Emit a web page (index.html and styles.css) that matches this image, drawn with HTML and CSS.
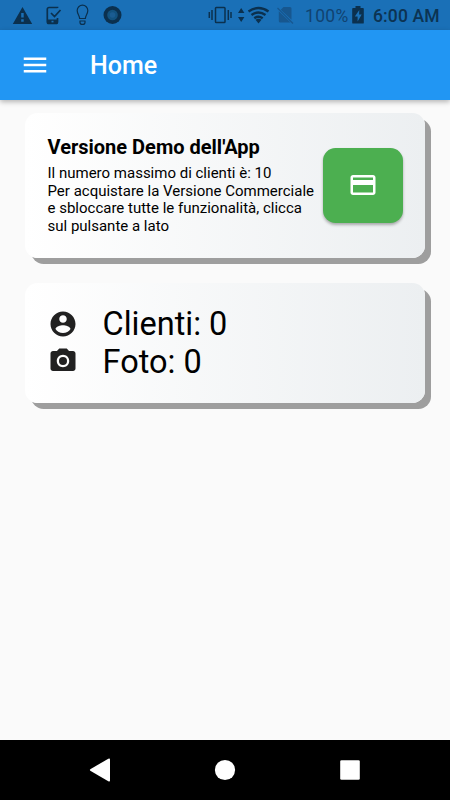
FILE: index.html
```html
<!DOCTYPE html>
<html lang="it">
<head>
<meta charset="utf-8">
<title>Home</title>
<link rel="stylesheet" href="styles.css">
</head>
<body>
<div class="screen">
  <div class="status">
    <svg class="status-left" width="130" height="30" viewBox="0 0 130 30">
      <path class="dark" fill-rule="evenodd" d="M22.5 7 32.2 24H12.8ZM21.2 13v4.6h2.5V13ZM21.2 19.3v2.4h2.5v-2.4Z"/>
      <path class="line" stroke-width="1.7" d="M57.5 8V7.500H49a1.700 1.700 0 0 0-1.700 1.700v12.600a1.700 1.700 0 0 0 1.700 1.700h6.800a1.700 1.700 0 0 0 1.700-1.700V18M51 13l3.500 3.500 6-6.500"/>
      <path class="dark" fill-rule="evenodd" d="M47 19.500h11v4H47ZM51.500 20.800v1.700h2v-1.700Z"/>
      <path class="line" stroke-width="1.200" d="M79.600 18.500c0-3.200-2.400-4.500-2.400-8a5.300 5.300 0 0 1 10.600 0c0 3.500-2.400 4.800-2.400 8ZM79.500 21h6M80 21v1.400c0 2.600 5 2.600 5 0V21"/>
      <circle class="dark" cx="112.500" cy="15" r="9"/>
      <circle cx="112.500" cy="15" r="5.300" fill="#12527f"/>
      <circle cx="112.500" cy="15" r="2.800" fill="#1a5c91"/>
    </svg>
    <svg class="status-right" width="71" height="30" viewBox="0 0 71 30">
      <rect class="line" stroke-width="1.500" x="10.500" y="7.500" width="9.500" height="15" rx=".8"/>
      <path class="line" stroke-width="1.500" d="M7 10v10M23.300 10v10M4.300 12v6M26 12v6"/>
      <path class="dark" d="m36.200 8 3.200 5H33ZM33 17h6.400l-3.200 5Z"/>
      <path class="line" stroke-width="2.400" d="M43.500 11.500q10-7 20 0M46.500 15q7-5 14 0M49.300 18.300q4.200-3 8.400 0"/>
      <path class="dark" d="m53.500 23.500-3-3.800q3-2 6 0Z"/>
    </svg>
    <svg class="status-sim" width="18" height="30" viewBox="0 0 18 30">
      <path fill="#17578f" d="M7.500 7H14q1.500 0 1.500 1.500V19.800L4.800 9.700ZM2.800 11.200 14.500 22.500H4.300q-1.500 0-1.500-1.500Z"/>
      <path stroke="#17578f" stroke-width="1.300" d="m1.500 8 15.500 15.500"/>
    </svg>
    <span class="percent">100%</span>
    <svg class="battery" width="12" height="30" viewBox="0 0 12 30">
      <path class="dark" fill-rule="evenodd" d="M3.500 6h5v1.900h2.400q.9 0 .9.900v13.900q0 .9-.9.900H1.100q-.9 0-.9-.9V8.800q0-.9.900-.9h2.400ZM7.300 10 2.800 16.500h2.800v5l4.100-7H7.100Z"/>
    </svg>
    <span class="clock">6:00 AM</span>
  </div>
  <header class="appbar">
    <svg width="30" height="30" viewBox="0 0 24 24"><path fill="#fff" d="M3 18h18v-2H3v2zm0-5h18v-2H3v2zm0-7v2h18V6H3z"/></svg>
    <h1>Home</h1>
  </header>
  <main>
    <section class="card demo">
      <div class="copy">
        <h2>Versione Demo dell'App</h2>
        <p>Il numero massimo di clienti è: 10<br>Per acquistare la Versione Commerciale<br>e sbloccare tutte le funzionalità, clicca<br>sul pulsante a lato</p>
      </div>
      <button class="buy" aria-label="Acquista">
        <svg width="30" height="30" viewBox="0 0 24 24"><path fill="#fff" d="M20 4H4c-1.110 0-1.990.890-1.990 2L2 18c0 1.110.890 2 2 2h16c1.110 0 2-.890 2-2V6c0-1.110-.890-2-2-2zm0 14H4v-6h16v6zm0-10H4V6h16v2z"/></svg>
      </button>
    </section>
    <section class="card stats">
      <div class="row">
        <svg width="30" height="30" viewBox="0 0 24 24"><path fill="#212121" d="M12 2C6.480 2 2 6.480 2 12s4.480 10 10 10 10-4.480 10-10S17.520 2 12 2zm0 3c1.660 0 3 1.340 3 3s-1.340 3-3 3-3-1.340-3-3 1.340-3 3-3zm0 14.200c-2.500 0-4.710-1.280-6-3.220.030-1.990 4-3.080 6-3.080 1.990 0 5.970 1.090 6 3.080-1.290 1.940-3.500 3.220-6 3.220z"/></svg>
        <span>Clienti: 0</span>
      </div>
      <div class="row">
        <svg width="30" height="30" viewBox="0 0 24 24"><circle fill="#212121" cx="12" cy="12" r="3.200"/><path fill="#212121" d="M9 2 7.170 4H4c-1.100 0-2 .9-2 2v12c0 1.100.9 2 2 2h16c1.100 0 2-.9 2-2V6c0-1.100-.9-2-2-2h-3.170L15 2H9zm3 15c-2.760 0-5-2.240-5-5s2.240-5 5-5 5 2.240 5 5-2.240 5-5 5z"/></svg>
        <span>Foto: 0</span>
      </div>
    </section>
  </main>
  <nav class="navbar">
    <svg width="24" height="26" viewBox="0 0 24 26"><path fill="#fff" d="M2.700 12 20.300 1.700Q22 .8 22 2.500v21q0 1.700-1.700.8L2.700 14q-1.700-1 0-2Z"/></svg>
    <svg width="24" height="26" viewBox="0 0 24 26"><circle fill="#fff" cx="12" cy="13" r="10.100"/></svg>
    <svg width="24" height="26" viewBox="0 0 24 26"><rect fill="#fff" x="2.200" y="3.200" width="19.600" height="19.600" rx="1.300"/></svg>
  </nav>
</div>
</body>
</html>
```
FILE: styles.css
```css
* { box-sizing: border-box; }
body { margin: 0; font-family: Roboto, sans-serif; color: #000; }
h1, h2, p { margin: 0; }
svg { display: block; flex: none; }
.screen { display: flex; flex-direction: column; width: 450px; height: 800px; background: #fafafa; overflow: hidden; }
.status { display: flex; flex: none; height: 30px; background: #1a70b7; color: #0c3352; line-height: 32px; font-size: 17.5px; white-space: nowrap; }
.dark { fill: #0b304e; }
.line { fill: none; stroke: #0b304e; }
.status-left { margin-right: 75px; }
.percent { width: 48px; margin-left: 11px; color: #114371; letter-spacing: .3px; }
.battery { margin-left: -1px; }
.clock { margin-left: 9px; font-weight: 500; letter-spacing: .15px; }
.appbar { display: flex; flex: none; align-items: center; height: 70px; padding-left: 20px; background: #2196f3; color: #fff; box-shadow: 0 2px 5px rgba(0,0,0,.28); }
.appbar h1 { padding-top: 2px; margin-left: 40px; font-size: 25px; font-weight: 500; line-height: 30px; }
main { flex: 1; padding: 12.5px 25px; }
.card { display: flex; border-radius: 12.5px; background: linear-gradient(90deg, #fff, #eceff1); box-shadow: 6px 6px 0 #9e9e9e; }
.demo { height: 145px; padding-left: 22.5px; }
.copy { width: 275px; padding-top: 23px; white-space: nowrap; }
.copy h2 { font-size: 20px; font-weight: 700; line-height: 23px; }
.copy p { margin-top: 6.5px; font-size: 15px; line-height: 17.5px; }
.buy { display: flex; align-items: center; justify-content: center; width: 80px; height: 75px; margin-top: 35px; padding: 0; border: 0; border-radius: 12.5px; background: #4caf50; box-shadow: 0 2px 3px rgba(0,0,0,.3); }
.stats { flex-direction: column; height: 120px; margin-top: 25px; padding: 22.5px; }
.row { display: flex; align-items: center; height: 37.5px; font-size: 32.5px; line-height: 37.5px; }
.row span { padding-top: 2px; margin-left: 25px; }
.navbar { display: flex; flex: none; align-items: center; justify-content: space-between; height: 60px; padding: 0 88px; background: #000; }
```
